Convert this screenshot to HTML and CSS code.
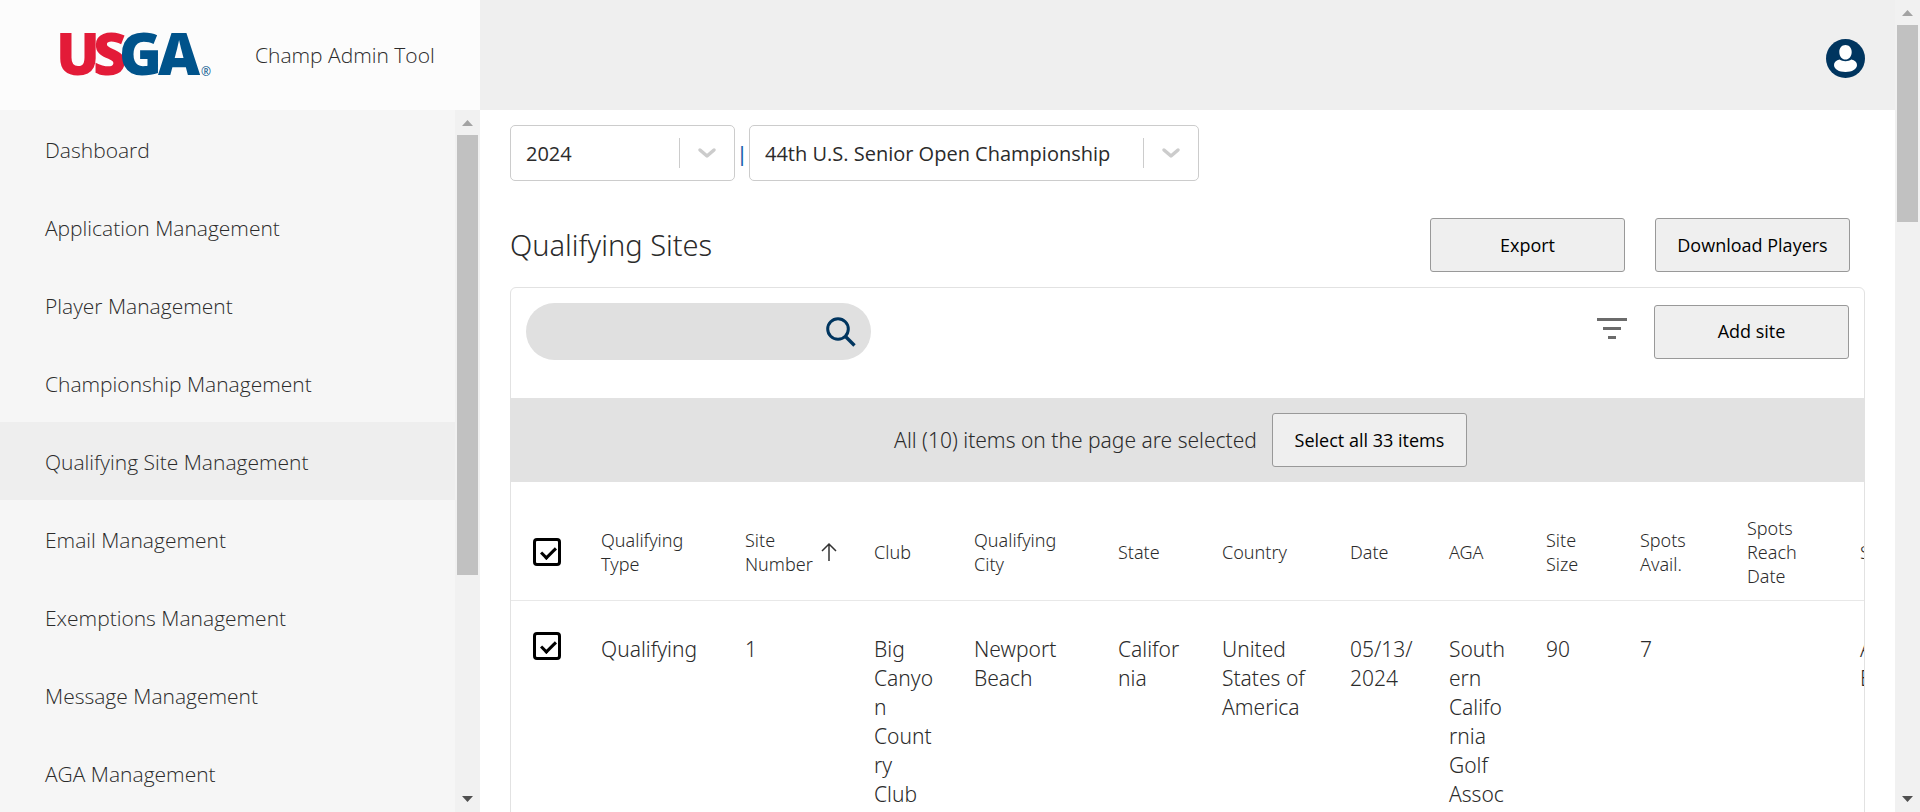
FILE: index.html
```html
<!DOCTYPE html>
<html lang="en">
<head>
<meta charset="utf-8">
<title>Champ Admin Tool</title>
<link rel="stylesheet" href="styles.css">
</head>
<body>
<div class="app">
  <div class="page">
    <aside class="sidebar">
      <div class="brand">
        <svg class="logo" viewBox="0 0 152 44" role="img" aria-label="USGA">
          <g class="logo-word">
            <text x="33" y="42" class="logo-red">S</text>
            <text x="-4" y="42" class="logo-red">U</text>
            <text x="59" y="42" class="logo-blue">G</text>
            <text x="98" y="42" class="logo-blue">A</text>
          </g>
          <text x="141" y="43" class="logo-mark">®</text>
        </svg>
        <span class="brand-name">Champ Admin Tool</span>
      </div>
      <div class="nav-wrap">
        <nav class="nav">
          <a class="nav-item" href="#">Dashboard</a>
          <a class="nav-item" href="#">Application Management</a>
          <a class="nav-item" href="#">Player Management</a>
          <a class="nav-item" href="#">Championship Management</a>
          <a class="nav-item nav-item-active" href="#">Qualifying Site Management</a>
          <a class="nav-item" href="#">Email Management</a>
          <a class="nav-item" href="#">Exemptions Management</a>
          <a class="nav-item" href="#">Message Management</a>
          <a class="nav-item" href="#">AGA Management</a>
        </nav>
        <div class="scrollbar" aria-hidden="true">
          <svg class="scroll-arrow" viewBox="0 0 25 25"><path fill="#a3a3a3" d="M7 16l5.500-6 5.500 6z"/></svg>
          <div class="scroll-track"><div class="scroll-thumb" style="height:67.500%"></div></div>
          <svg class="scroll-arrow" viewBox="0 0 25 25"><path fill="#505050" d="M7 9l5.500 6 5.500-6z"/></svg>
        </div>
      </div>
    </aside>

    <div class="main">
      <header class="topbar">
        <button class="avatar" aria-label="Account">
          <svg viewBox="0 0 39 39" width="39" height="39"><circle cx="19.500" cy="19.500" r="19.500" fill="#00355f"/><path fill="#fff" d="M19.500 6c3.600 0 6.200 2.800 6.200 7 0 4.300-2.600 7.600-6.200 7.600s-6.200-3.300-6.200-7.600c0-4.200 2.600-7 6.200-7zM13.600 20.600c1.700 1.100 3.700 1.700 5.900 1.700s4.200-.6 5.900-1.700c3.400.6 5.600 2.600 5.600 5.400 0 4.200-5 7-11.500 7S8 30.200 8 26c0-2.800 2.200-4.800 5.600-5.400z"/></svg>
        </button>
      </header>

      <main class="content">
        <div class="filters">
          <div class="picker picker-year">
            <select class="picker-select" aria-label="Year"><option>2024</option></select>
            <span class="picker-rule"></span>
            <svg class="picker-icon" viewBox="0 0 20 20"><path d="M3 7l7 6 7-6"/></svg>
          </div>
          <span class="pipe">|</span>
          <div class="picker picker-event">
            <select class="picker-select" aria-label="Championship"><option>44th U.S. Senior Open Championship</option></select>
            <span class="picker-rule"></span>
            <svg class="picker-icon" viewBox="0 0 20 20"><path d="M3 7l7 6 7-6"/></svg>
          </div>
        </div>

        <div class="heading">
          <h1 class="title">Qualifying Sites</h1>
          <button class="btn">Export</button>
          <button class="btn">Download Players</button>
        </div>

        <section class="panel">
          <div class="toolbar">
            <div class="search">
              <input class="search-input" type="text" aria-label="Search sites">
              <button class="search-btn" aria-label="Search">
                <svg viewBox="0 0 30 30" width="30" height="30" fill="none" stroke="#00355f"><circle cx="12" cy="12" r="10.300" stroke-width="3"/><path stroke-width="3.400" d="M19.500 19.500l9 9"/></svg>
              </button>
            </div>
            <button class="filter-btn" aria-label="Filter">
              <svg viewBox="0 0 30 22" width="30" height="22" fill="#6b6b6b"><path d="M0 0h30v3H0zM6 9h18v3H6zM11 18h8v3h-8z"/></svg>
            </button>
            <button class="btn">Add site</button>
          </div>

          <div class="banner">
            <span>All (10) items on the page are selected</span>
            <button class="btn">Select all 33 items</button>
          </div>

          <table class="grid">
            <colgroup>
              <col class="c-check"><col class="c-type"><col class="c-number"><col class="c-club"><col class="c-city"><col class="c-state"><col class="c-country"><col class="c-date"><col class="c-aga"><col class="c-size"><col class="c-avail"><col class="c-reach"><col class="c-last">
            </colgroup>
            <thead>
              <tr>
                <th class="check-cell"><input class="check" type="checkbox" aria-label="Select all rows" checked></th>
                <th>Qualifying<br>Type</th>
                <th><span class="sorted">Site<br>Number <svg viewBox="0 0 16 20" width="16" height="20" fill="none" stroke="#333" stroke-width="1.500"><path d="M8 19V2M1 9l7-7 7 7"/></svg></span></th>
                <th>Club</th>
                <th>Qualifying<br>City</th>
                <th>State</th>
                <th>Country</th>
                <th>Date</th>
                <th>AGA</th>
                <th>Site<br>Size</th>
                <th>Spots<br>Avail.</th>
                <th>Spots<br>Reach<br>Date</th>
                <th>S</th>
              </tr>
            </thead>
            <tbody>
              <tr>
                <td class="check-cell"><input class="check" type="checkbox" aria-label="Select site 1" checked></td>
                <td>Qualifying</td>
                <td>1</td>
                <td>Big<br>Canyo<br>n<br>Count<br>ry<br>Club</td>
                <td>Newport<br>Beach</td>
                <td>Califor<br>nia</td>
                <td>United<br>States of<br>America</td>
                <td>05/13/<br>2024</td>
                <td>South<br>ern<br>Califo<br>rnia<br>Golf<br>Assoc</td>
                <td>90</td>
                <td>7</td>
                <td></td>
                <td>A<br>E</td>
              </tr>
            </tbody>
          </table>
        </section>
      </main>
    </div>
  </div>

  <div class="scrollbar" aria-hidden="true">
    <svg class="scroll-arrow" viewBox="0 0 25 25"><path fill="#a3a3a3" d="M7 16l5.500-6 5.500 6z"/></svg>
    <div class="scroll-track"><div class="scroll-thumb" style="height:25.800%"></div></div>
    <svg class="scroll-arrow" viewBox="0 0 25 25"><path fill="#505050" d="M7 9l5.500 6 5.500-6z"/></svg>
  </div>
</div>
</body>
</html>
```
FILE: styles.css
```css
* { box-sizing: border-box; }

body {
  margin: 0;
  background: #fff;
  color: #2b2b2b;
  font-family: "Noto Sans", "Open Sans", sans-serif;
  font-size: 21px;
  font-weight: 300;
  line-height: 29px;
}

button, input, select { font: inherit; color: inherit; margin: 0; padding: 0; }
button { cursor: pointer; }

.app { display: flex; height: 100vh; overflow: hidden; }
.page { display: flex; flex: 1; min-width: 0; }

/* Sidebar */
.sidebar { display: flex; flex-direction: column; flex: none; width: 480px; background: #f6f6f6; font-family: "Open Sans", sans-serif; font-weight: 350; }
.brand { display: flex; align-items: center; gap: 43px; flex: none; height: 110px; padding-left: 60px; background: #fcfcfc; }
.logo { width: 152px; height: 44px; overflow: visible; }
.logo-word { font-family: "Noto Sans", sans-serif; font-size: 58px; font-weight: 900; }
.logo-red { fill: #e31b38; }
.logo-blue { fill: #00538b; }
.logo-mark { font-size: 12px; font-weight: 400; fill: #00538b; }
.brand-name { white-space: nowrap; }
.nav-wrap { display: flex; flex: 1; min-height: 0; }
.nav { flex: 1; overflow: hidden; }
.nav-item { display: flex; align-items: center; height: 78px; padding: 2px 0 0 45px; color: inherit; text-decoration: none; }
.nav-item-active { background: #eee; }

/* Scrollbars */
.scrollbar { display: flex; flex-direction: column; flex: none; width: 25px; background: #f1f1f1; }
.scroll-arrow { flex: none; width: 25px; height: 25px; }
.scroll-track { flex: 1; padding: 0 2px; }
.scroll-thumb { background: #c1c1c1; }

/* Main column */
.main { display: flex; flex-direction: column; flex: 1; min-width: 0; }
.topbar { display: flex; align-items: center; justify-content: flex-end; flex: none; height: 110px; padding: 7px 30px 0; background: #efefef; }
.avatar { display: flex; border: 0; background: none; }
.content { flex: 1; min-height: 0; padding: 15px 30px 0; overflow: hidden; }

.filters { display: flex; align-items: center; }
.picker { display: flex; align-items: center; height: 56px; border: 1px solid #ccc; border-radius: 5px; }
.picker-year { width: 225px; }
.picker-event { width: 450px; }
.picker-select { flex: 1; min-width: 0; height: 100%; padding-left: 15px; border: 0; background: none; appearance: none; font-family: "Open Sans", sans-serif; font-size: 20px; font-weight: 500; }
.picker-rule { width: 1px; height: 30px; background: #ccc; }
.picker-icon { width: 20px; height: 20px; margin: 0 17px; fill: none; stroke: #ccc; stroke-width: 3.500; stroke-linecap: round; stroke-linejoin: round; }
.pipe { width: 14px; text-align: center; color: #1c62ad; font-size: 20px; font-weight: 500; }

.heading { display: flex; align-items: center; gap: 30px; margin-top: 37px; padding-right: 15px; }
.title { flex: 1; margin: 0; font-size: 29px; font-weight: 300; line-height: 40px; }
.btn { width: 195px; height: 54px; border: 1px solid #999; border-radius: 3px; background: #efefef; color: #000; font-family: "Open Sans", sans-serif; font-size: 18px; font-weight: 450; white-space: nowrap; }

.panel { margin-top: 15px; border: 1px solid #e2e2e2; border-radius: 6px; overflow: hidden; }
.toolbar { display: flex; align-items: center; height: 110px; padding: 0 15px 23px; }
.search { display: flex; align-items: center; width: 345px; height: 57px; margin-right: auto; padding-right: 15px; border-radius: 29px; background: #e0e0e0; }
.search-input { flex: 1; min-width: 0; height: 100%; padding-left: 25px; border: 0; outline: 0; background: none; }
.search-btn, .filter-btn { display: flex; border: 0; background: none; }
.filter-btn { margin-right: 27px; padding-bottom: 6px; }

.banner { display: flex; align-items: center; justify-content: center; gap: 15px; height: 84px; padding-right: 14px; background: #e2e2e2; }

/* Sites table */
.grid { width: 1430px; margin: 19px 0 30px; border-collapse: collapse; table-layout: fixed; }
.grid th { height: 99px; padding: 4px 0 0; border-bottom: 1px solid #e8e8e8; font-size: 18px; font-weight: 300; line-height: 24px; text-align: left; vertical-align: middle; white-space: nowrap; }
.grid td { padding: 34px 0 0; vertical-align: top; white-space: nowrap; }
.grid .check-cell { padding-left: 22px; }
.grid td.check-cell { padding-top: 31px; }
.check { display: block; width: 28px; height: 28px; border: 3px solid #000; border-radius: 4px; appearance: none; position: relative; background: #fff; }
.check:checked::after { content: ""; position: absolute; left: 8px; top: 3px; width: 6px; height: 12px; border: solid #000; border-width: 0 3px 3px 0; transform: rotate(45deg); }
.sorted { display: flex; align-items: center; gap: 8px; }

.c-check { width: 90px; }
.c-type { width: 144px; }
.c-number { width: 129px; }
.c-club { width: 100px; }
.c-city { width: 144px; }
.c-state { width: 104px; }
.c-country { width: 128px; }
.c-date { width: 99px; }
.c-aga { width: 97px; }
.c-size { width: 94px; }
.c-avail { width: 107px; }
.c-reach { width: 113px; }
.c-last { width: 81px; }
```
